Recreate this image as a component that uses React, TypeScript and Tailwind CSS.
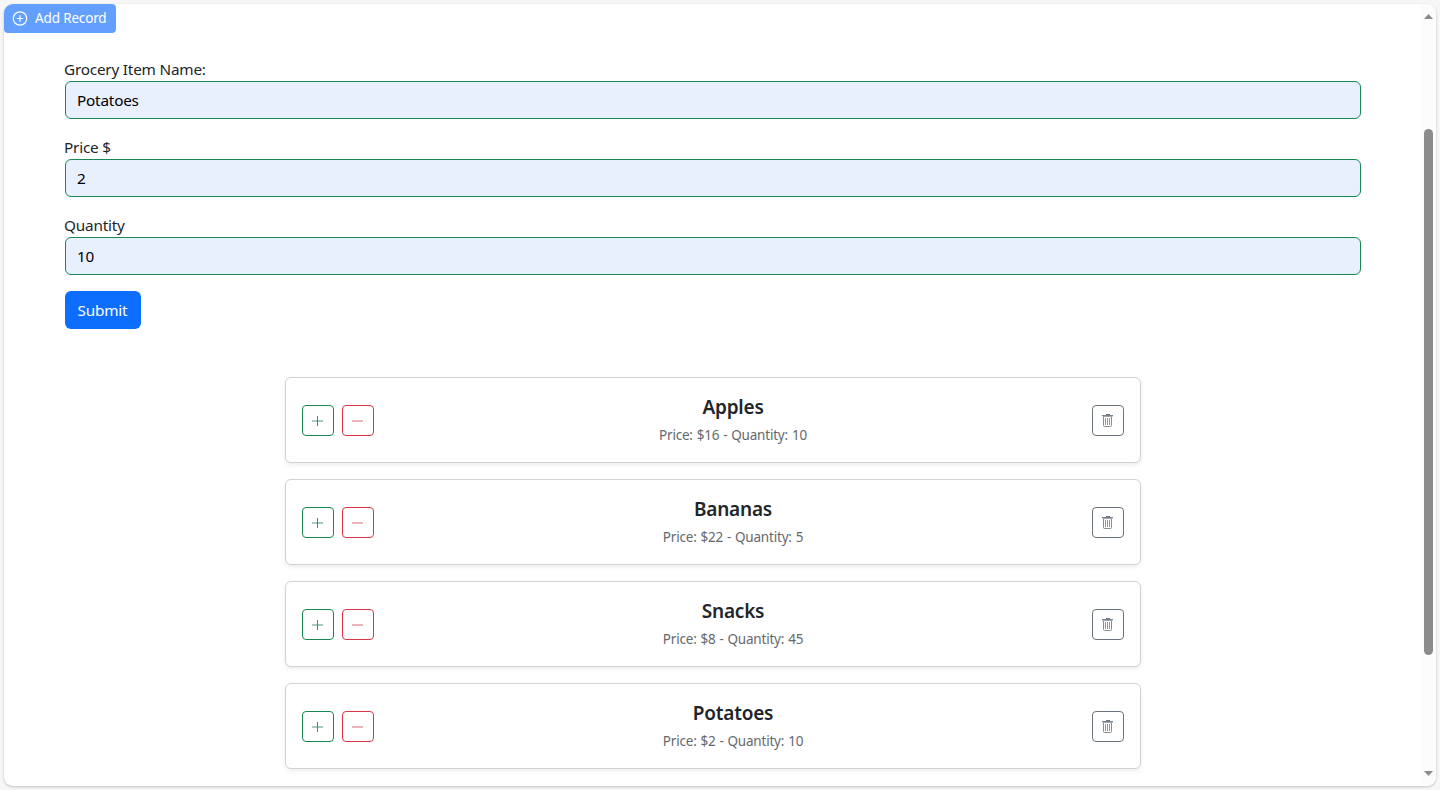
import { useState } from "react";

type Item = { name: string; price: number; quantity: number };

const ITEMS: Item[] = [
  { name: "Apples", price: 16, quantity: 10 },
  { name: "Bananas", price: 22, quantity: 5 },
  { name: "Snacks", price: 8, quantity: 45 },
  { name: "Potatoes", price: 2, quantity: 10 },
];

function Field({ label, value, type = "text" }: { label: string; value: string; type?: string }) {
  const [text, setText] = useState(value);
  return (
    <label className="mb-4 block">
      <span className="-ml-px block h-6 text-[15.3px] leading-6 tracking-[-0.2px] text-[#212529]">{label}</span>
      <input
        type={type}
        value={text}
        onChange={(e) => setText(e.target.value)}
        className="block h-[38px] w-full rounded-md border border-[#198754] bg-[#e8f0fe] px-[11px] text-[15.3px] leading-6 tracking-[-0.2px] text-black outline-none"
      />
    </label>
  );
}

function PlusCircleIcon() {
  return (
    <svg width="16" height="16" viewBox="0 0 16 16" fill="none" stroke="currentColor" strokeWidth="1.2">
      <circle cx="8" cy="7.5" r="6.7" />
      <path d="M8 4.3v6.4M4.8 7.5h6.4" />
    </svg>
  );
}

function PlusIcon() {
  return (
    <svg width="14" height="15" viewBox="0 0 14 15" fill="none">
      <path d="M1 8h11" stroke="#a5ccbc" strokeWidth="2" />
      <path d="M6.5 3v10" stroke="#3b8a7c" />
    </svg>
  );
}

function MinusIcon() {
  return (
    <svg width="14" height="15" viewBox="0 0 14 15" fill="none">
      <path d="M1 8h11" stroke="#eeb6ba" strokeWidth="2" />
    </svg>
  );
}

function TrashIcon() {
  return (
    <svg width="14" height="15" viewBox="0 0 14 15" fill="none" stroke="#6c757d">
      <path d="M5 1.5h4" />
      <path d="M1 2.5h11" stroke="#7b838a" />
      <path d="M1.5 3.5h10" stroke="#a0a6ab" />
      <path d="M2.5 4v8.5q0 1 1 1h6q1 0 1-1V4" stroke="#7d938c" />
      <path d="M4.5 5v7M6.5 5v7M8.5 5v7" stroke="#7fa58c" />
    </svg>
  );
}

function ItemCard({ item }: { item: Item }) {
  return (
    <li className="flex h-[86px] items-center rounded-md border border-[#d0d2d4] bg-white px-4 shadow-[0_2px_4px_rgba(0,0,0,0.075)]">
      <div className="flex gap-2">
        <button aria-label="Increase" className="flex h-[31px] w-8 items-center justify-center rounded border border-[#198754]">
          <PlusIcon />
        </button>
        <button aria-label="Decrease" className="flex h-[31px] w-8 items-center justify-center rounded border border-[#dc3545]">
          <MinusIcon />
        </button>
      </div>
      <div className="flex-1 text-center">
        <h5 className="mb-1.5 text-[19px] font-semibold leading-6 tracking-[-0.2px] text-[#212529]">{item.name}</h5>
        <p className="text-[13.5px] leading-[21px] tracking-[-0.2px] text-[#65696d] [word-spacing:0.6px]">
          Price: ${item.price} - Quantity: {item.quantity}
        </p>
      </div>
      <button aria-label="Delete" className="flex h-[31px] w-8 items-center justify-center rounded border border-[#6c757d]">
        <TrashIcon />
      </button>
    </li>
  );
}

function Scrollbar() {
  return (
    <div className="flex w-[15px] shrink-0 flex-col items-center bg-[#fcfcfc] py-2.5">
      <svg width="9" height="5" viewBox="0 0 9 5" fill="#8b8b8b">
        <path d="M4.5 0L9 5H0z" />
      </svg>
      <div className="mt-[110px] h-[526px] w-[9px] rounded-full bg-[#8b8b8b]" />
      <svg className="mt-auto" width="9" height="5" viewBox="0 0 9 5" fill="#8b8b8b">
        <path d="M0 0h9L4.5 5z" />
      </svg>
    </div>
  );
}

export default function App() {
  return (
    <div className="h-[790px] w-full overflow-hidden bg-[#f7f7f7] p-1 font-['Noto_Sans',sans-serif]">
      <div className="flex h-[782px] overflow-hidden rounded-[9px] bg-white shadow-[0_1px_3px_rgba(0,0,0,0.22)]">
        <main className="min-w-0 flex-1">
          <button className="flex h-[29px] w-28 items-center rounded rounded-tl-none bg-[#639fff] pl-2 text-white">
            <PlusCircleIcon />
            <span className="ml-[7px] whitespace-nowrap text-[13.5px] tracking-[-0.15px]">Add Record</span>
          </button>
          <form className="ml-[61px] w-[1296px] pt-6" onSubmit={(e) => e.preventDefault()}>
            <Field label="Grocery Item Name:" value="Potatoes" />
            <Field label="Price $" value="2" />
            <Field label="Quantity" value="10" />
            <button className="h-[38px] w-[76px] rounded-md bg-[#0d6efd] pr-px text-[15.3px] tracking-[-0.2px] text-white">Submit</button>
          </form>
          <ul className="ml-[281px] mt-12 flex w-[856px] flex-col gap-4">
            {ITEMS.map((item) => (
              <ItemCard key={item.name} item={item} />
            ))}
          </ul>
        </main>
        <Scrollbar />
      </div>
    </div>
  );
}
